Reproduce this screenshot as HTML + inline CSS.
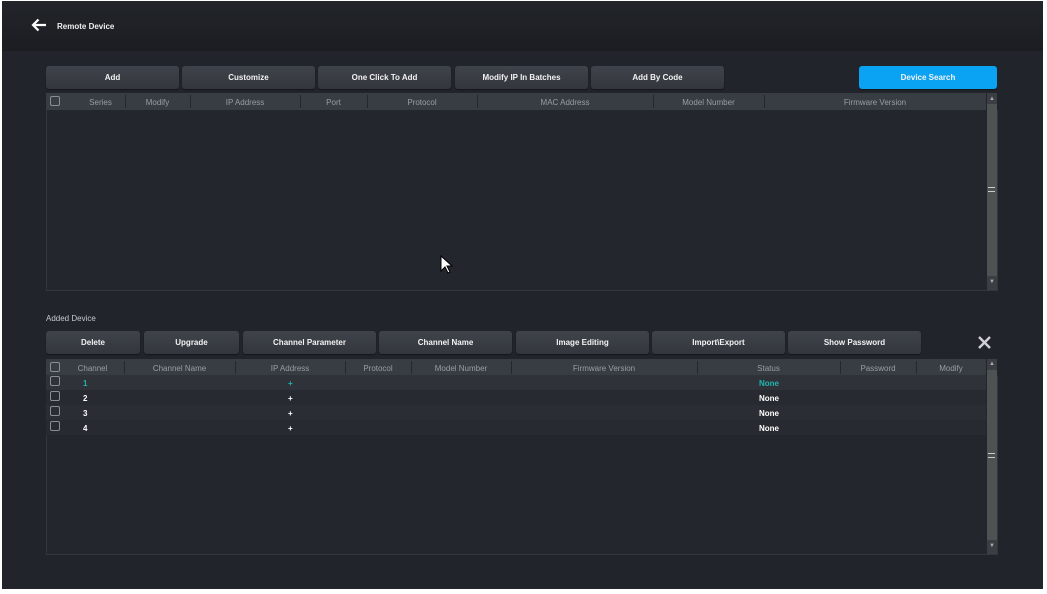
<!DOCTYPE html>
<html><head><style>
*{margin:0;padding:0;box-sizing:border-box}
body{width:1047px;height:594px;background:#fff;position:relative;overflow:hidden;font-family:"Liberation Sans",sans-serif;}
#app{position:absolute;left:2px;top:1px;width:1041px;height:588px;background:#21242b}
#hdr{position:absolute;left:0;top:0;width:1041px;height:50px;background:linear-gradient(#22252a,#1b1d22)}
.a{position:absolute}
.btn{position:absolute;height:23px;background:linear-gradient(#3f434a,#33373d);border-radius:3px;color:#f2f2f2;font-size:8px;font-weight:bold;text-align:center;line-height:24px;box-shadow:0 1px 1px #15171a}
.th{position:absolute;height:17px;background:#383c43;color:#9a9ea4;font-size:8px}
.th span{position:absolute;top:1px;line-height:17px;text-align:center}
.th i{position:absolute;top:2px;width:1px;height:13px;background:#24272c}
.tb{position:absolute;background:#23262d;border:1px solid #33363c;border-top:none}
.sb{position:absolute;background:#4d5252;width:10px}
.cb{position:absolute;width:10px;height:10px;border:1px solid #8a8d92;border-radius:2px}
.row{position:absolute;left:46px;width:940px;height:15px;font-size:8px;font-weight:bold;color:#fff}
.row span{position:absolute;top:1px;line-height:15px}
</style></head><body>
<div id="app">
<div id="hdr"></div>
</div>
<svg class="a" style="left:31px;top:18px" width="16" height="14" viewBox="0 0 16 14"><path d="M15 7H2M7.5 1.5L2 7l5.5 5.5" stroke="#fff" stroke-width="2.2" fill="none"/></svg>
<div class="a" style="left:57px;top:22px;color:#eee;font-size:8px;font-weight:bold">Remote Device</div>

<div class="btn" style="left:46px;top:66px;width:133px">Add</div>
<div class="btn" style="left:182px;top:66px;width:133px">Customize</div>
<div class="btn" style="left:318px;top:66px;width:133px">One Click To Add</div>
<div class="btn" style="left:455px;top:66px;width:133px">Modify IP In Batches</div>
<div class="btn" style="left:591px;top:66px;width:133px">Add By Code</div>
<div class="btn" style="left:859px;top:66px;width:138px;background:#0aa2f2">Device Search</div>

<div class="tb" style="left:46px;top:110px;width:952px;height:181px"></div>
<div class="th" style="left:46px;top:93px;width:940px">
<div class="cb" style="left:4px;top:3px"></div>
<span style="left:15px;width:79px">Series</span><i style="left:79px"></i>
<span style="left:79px;width:65px">Modify</span><i style="left:144px"></i>
<span style="left:144px;width:110px">IP Address</span><i style="left:254px"></i>
<span style="left:254px;width:67px">Port</span><i style="left:321px"></i>
<span style="left:321px;width:110px">Protocol</span><i style="left:431px"></i>
<span style="left:431px;width:176px">MAC Address</span><i style="left:607px"></i>
<span style="left:607px;width:111px">Model Number</span><i style="left:718px"></i>
<span style="left:718px;width:222px">Firmware Version</span>
</div>
<div class="sb" style="left:987px;top:93px;height:197px;background:#3b3f44"></div>
<div class="sb" style="left:987px;top:104px;height:172px"></div>
<div class="a" style="left:989px;top:96px;color:#aaa;font-size:6px">▲</div>
<div class="a" style="left:989px;top:279px;color:#aaa;font-size:6px">▼</div>
<div class="a" style="left:988px;top:187px;width:7px;height:5px;border-top:1px solid #ccc;border-bottom:1px solid #ccc"></div>
<svg class="a" style="left:440px;top:255px" width="14" height="20" viewBox="0 0 14 20"><path d="M1 1v15l4-4 3 6 2-1-3-6h5z" fill="#fff" stroke="#000" stroke-width="1"/></svg>

<div class="a" style="left:46px;top:314px;color:#c8cad0;font-size:8px">Added Device</div>
<div class="btn" style="left:46px;top:331px;width:94px">Delete</div>
<div class="btn" style="left:144px;top:331px;width:95px">Upgrade</div>
<div class="btn" style="left:243px;top:331px;width:133px">Channel Parameter</div>
<div class="btn" style="left:379px;top:331px;width:133px">Channel Name</div>
<div class="btn" style="left:516px;top:331px;width:133px">Image Editing</div>
<div class="btn" style="left:652px;top:331px;width:133px">Import\Export</div>
<div class="btn" style="left:788px;top:331px;width:133px">Show Password</div>
<svg class="a" style="left:978px;top:336px" width="13" height="13" viewBox="0 0 13 13"><path d="M1 1l11 11M12 1L1 12" stroke="#cfd1d4" stroke-width="2.4"/></svg>

<div class="tb" style="left:46px;top:376px;width:952px;height:179px"></div>
<div class="th" style="left:46px;top:359px;width:940px">
<div class="cb" style="left:4px;top:3px"></div>
<span style="left:15px;width:63px">Channel</span><i style="left:78px"></i>
<span style="left:78px;width:111px">Channel Name</span><i style="left:189px"></i>
<span style="left:189px;width:110px">IP Address</span><i style="left:299px"></i>
<span style="left:299px;width:66px">Protocol</span><i style="left:365px"></i>
<span style="left:365px;width:100px">Model Number</span><i style="left:465px"></i>
<span style="left:465px;width:186px">Firmware Version</span><i style="left:651px"></i>
<span style="left:651px;width:143px">Status</span><i style="left:794px"></i>
<span style="left:794px;width:76px">Password</span><i style="left:870px"></i>
<span style="left:870px;width:70px">Modify</span>
</div>
<div class="row" style="top:375px;background:#2f3339;color:#1fb5b0"><div class="cb" style="left:4px;top:1px"></div><span style="left:37px">1</span><span style="left:242px">+</span><span style="left:713px">None</span></div>
<div class="row" style="top:390px;background:#272a30"><div class="cb" style="left:4px;top:1px"></div><span style="left:37px">2</span><span style="left:242px">+</span><span style="left:713px">None</span></div>
<div class="row" style="top:405px;background:#2a2d33"><div class="cb" style="left:4px;top:1px"></div><span style="left:37px">3</span><span style="left:242px">+</span><span style="left:713px">None</span></div>
<div class="row" style="top:420px;background:#272a30"><div class="cb" style="left:4px;top:1px"></div><span style="left:37px">4</span><span style="left:242px">+</span><span style="left:713px">None</span></div>
<div class="sb" style="left:987px;top:359px;height:195px;background:#3b3f44"></div>
<div class="sb" style="left:987px;top:370px;height:170px"></div>
<div class="a" style="left:989px;top:361px;color:#aaa;font-size:6px">▲</div>
<div class="a" style="left:989px;top:543px;color:#aaa;font-size:6px">▼</div>
<div class="a" style="left:988px;top:453px;width:7px;height:5px;border-top:1px solid #ccc;border-bottom:1px solid #ccc"></div>
</body></html>
